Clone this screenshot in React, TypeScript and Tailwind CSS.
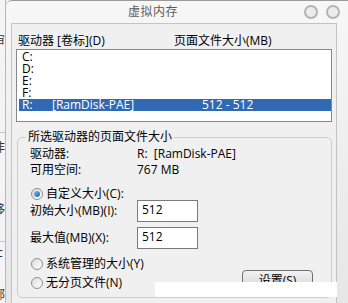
import React from "react";

const font = { fontFamily: '"Open Sans", "Noto Sans CJK SC", sans-serif' };

const Radio: React.FC<{ checked?: boolean; label: string }> = ({ checked, label }) => (
  <div className="flex items-center h-[13px]">
    <div className="w-[12px] h-[12px] rounded-full border border-[#8e8f8f] bg-gradient-to-br from-[#dcdcdc] to-[#ffffff] flex items-center justify-center">
      {checked && <div className="w-[6px] h-[6px] rounded-full bg-gradient-to-br from-[#7cc3f5] to-[#1b5fa8]" />}
    </div>
    <span className="ml-[3px] leading-[14px]">{label}</span>
  </div>
);

const SizeField: React.FC<{ label: string; value: string }> = ({ label, value }) => (
  <div className="flex items-center h-[22px]">
    <span className="w-[107px] leading-[14px]">{label}</span>
    <div className="w-[61px] h-[22px] border border-[#7a7a7a] bg-white pl-[4px] pt-[2px] leading-[14px]">{value}</div>
  </div>
);

const App: React.FC = () => {
  const drives = ["C:", "D:", "E:", "F:"];

  return (
    <div className="relative w-[348px] h-[303px] overflow-hidden flex bg-[#f3f3f3] text-[12px] text-black" style={font}>
      {/* window behind */}
      <div className="w-[6px] shrink-0 bg-[#f4f4f4] border-r border-[#b8b8b8] overflow-hidden flex flex-col text-[12px] text-[#333]">
        <span className="mt-[34px] -ml-[7px] leading-[14px]">审</span>
        <div className="mt-[84px] h-px bg-[#c8c8c8]" />
        <span className="mt-[8px] -ml-[7px] leading-[14px]">非</span>
        <span className="mt-[48px] -ml-[7px] leading-[14px]">移</span>
        <div className="mt-[24px] h-px bg-[#c8c8c8]" />
        <span className="mt-[4px] -ml-[3px] leading-[14px]">c</span>
        <span className="mt-[28px] -ml-[7px] leading-[14px]">部</span>
      </div>

      {/* dialog frame */}
      <div className="flex-1 flex flex-col border-t border-[#9a9a9a] rounded-tl-[6px] bg-gradient-to-b from-[#f7f7f7] to-[#e6e6e6]">
        <div className="h-[22px] shrink-0 flex items-center relative">
          <span className="pl-[122px] text-[#5a5a5a] leading-[14px] tracking-[0.5px]">虚拟内存</span>
          <div className="ml-auto mr-[8px] flex gap-[8px]">
            <div className="w-[14px] h-[14px] rounded-full border-[2px] border-[#b4b4b4] bg-[#ececec]" />
            <div className="w-[14px] h-[14px] rounded-full border-[2px] border-[#b4b4b4] bg-[#ececec]" />
          </div>
        </div>

        <div className="flex-1 flex pl-[5px]">
          <div className="w-[326px] bg-[#f0f0f0] border-l border-t border-r border-[#c3c3c3] flex flex-col">
            <div className="flex pl-[6px] pt-[10px] leading-[14px]">
              <span className="w-[156px]">驱动器 [卷标](D)</span>
              <span>页面文件大小(MB)</span>
            </div>

            <div className="mt-[1px] ml-[4px] w-[316px] h-[73px] border border-[#828790] bg-white pt-[1px] pl-[2px]">
              {drives.map((d) => (
                <div key={d} className="h-[12px] leading-[12px] pl-[3px]">{d}</div>
              ))}
              <div className="h-[12px] leading-[12px] pl-[3px] bg-[#3169b2] text-white flex">
                <span className="w-[30px]">R:</span>
                <span className="w-[150px]">[RamDisk-PAE]</span>
                <span>512 - 512</span>
              </div>
            </div>

            <fieldset className="mt-[8px] ml-[5px] w-[315px] h-[168px] border border-[#c9ced3] rounded-[5px] px-[12px]">
              <legend className="ml-[-4px] px-[2px] leading-[14px]">所选驱动器的页面文件大小</legend>
              <div className="flex flex-col pt-[3px]">
                <div className="flex leading-[14px]">
                  <span className="w-[107px]">驱动器:</span>
                  <span className="whitespace-pre">R:  [RamDisk-PAE]</span>
                </div>
                <div className="flex leading-[14px] mt-[2px]">
                  <span className="w-[107px]">可用空间:</span>
                  <span>767 MB</span>
                </div>
                <div className="mt-[10px] ml-[1px]">
                  <Radio checked label="自定义大小(C):" />
                </div>
                <SizeField label="初始大小(MB)(I):" value="512" />
                <div className="mt-[5px]">
                  <SizeField label="最大值(MB)(X):" value="512" />
                </div>
                <div className="flex items-start justify-between mt-[8px] pr-[6px]">
                  <div className="flex flex-col gap-[6px] ml-[1px]">
                    <Radio label="系统管理的大小(Y)" />
                    <Radio label="无分页文件(N)" />
                  </div>
                  <button className="mt-[13px] w-[71px] h-[22px] rounded-[4px] border border-[#707070] bg-gradient-to-b from-[#f2f2f2] to-[#d4d4d4] leading-[14px]">
                    设置(S)
                  </button>
                </div>
              </div>
            </fieldset>
          </div>
          <div className="flex-1" />
        </div>
      </div>

      {/* white patch over the lower right */}
      <div className="absolute left-[155px] top-[282px] w-[182px] h-[15px] bg-white" />
    </div>
  );
};

export default App;
